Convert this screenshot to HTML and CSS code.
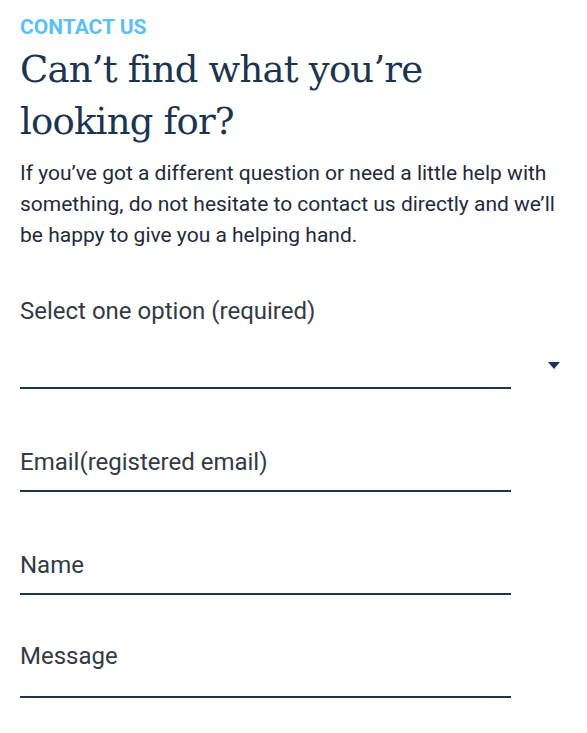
FILE: index.html
```html
<!DOCTYPE html>
<html lang="en">
<head>
<meta charset="utf-8">
<title>Contact us</title>
<link rel="stylesheet" href="styles.css">
</head>
<body>
<main class="contact">
  <p class="eyebrow">CONTACT US</p>
  <h1 class="title">Can’t find what you’re looking for?</h1>
  <p class="intro">If you’ve got a different question or need a little help with something, do not hesitate to contact us directly and we’ll be happy to give you a helping hand.</p>
  <form class="form">
    <div class="select-field">
      <label class="select-label">Select one option (required)</label>
      <div class="select-row">
        <div class="select-box"></div>
        <span class="caret"></span>
      </div>
    </div>
    <div class="field field-email"><label class="field-label">Email(registered email)</label></div>
    <div class="field field-name"><label class="field-label">Name</label></div>
    <div class="field field-message"><label class="field-label">Message</label></div>
  </form>
</main>
</body>
</html>
```
FILE: styles.css
```css
* { box-sizing: border-box; }
html, body { margin: 0; padding: 0; background: #ffffff; }
body { font-family: Roboto, "Liberation Sans", Arial, sans-serif; color: #1e2b3a; }
.contact { padding: 15px 20px 0 20px; }
.eyebrow {
  margin: 0;
  font-size: 21px;
  line-height: 24px;
  font-weight: 700;
  color: #5bc0f5;
}
.title {
  margin: 5px 0 0 0;
  font-family: "DejaVu Serif", "Liberation Serif", serif;
  font-weight: 400;
  font-size: 37px;
  line-height: 52px;
  color: #1b3550;
  letter-spacing: -0.8px;
  max-width: 470px;
}
.intro {
  margin: 10px 0 0 0;
  font-size: 21px;
  line-height: 31px;
  color: #1e2b3a;
}
.form { margin-top: 46px; }
.select-label, .field-label {
  display: block;
  font-size: 24px;
  line-height: 28px;
  color: #333a44;
}
.select-row { display: flex; align-items: flex-start; }
.select-box {
  width: 491px;
  height: 64px;
  border-bottom: 2px solid #1d3650;
  flex: none;
}
.caret {
  margin: 37px 0 0 37px;
  width: 0;
  height: 0;
  border-left: 6px solid transparent;
  border-right: 6px solid transparent;
  border-top: 7px solid #1d3650;
}
.field {
  width: 491px;
  border-bottom: 2px solid #1d3650;
}
.field-email { margin-top: 59px; padding-bottom: 14px; }
.field-name { margin-top: 59px; padding-bottom: 14px; }
.field-message { margin-top: 47px; padding-bottom: 26px; }
```
